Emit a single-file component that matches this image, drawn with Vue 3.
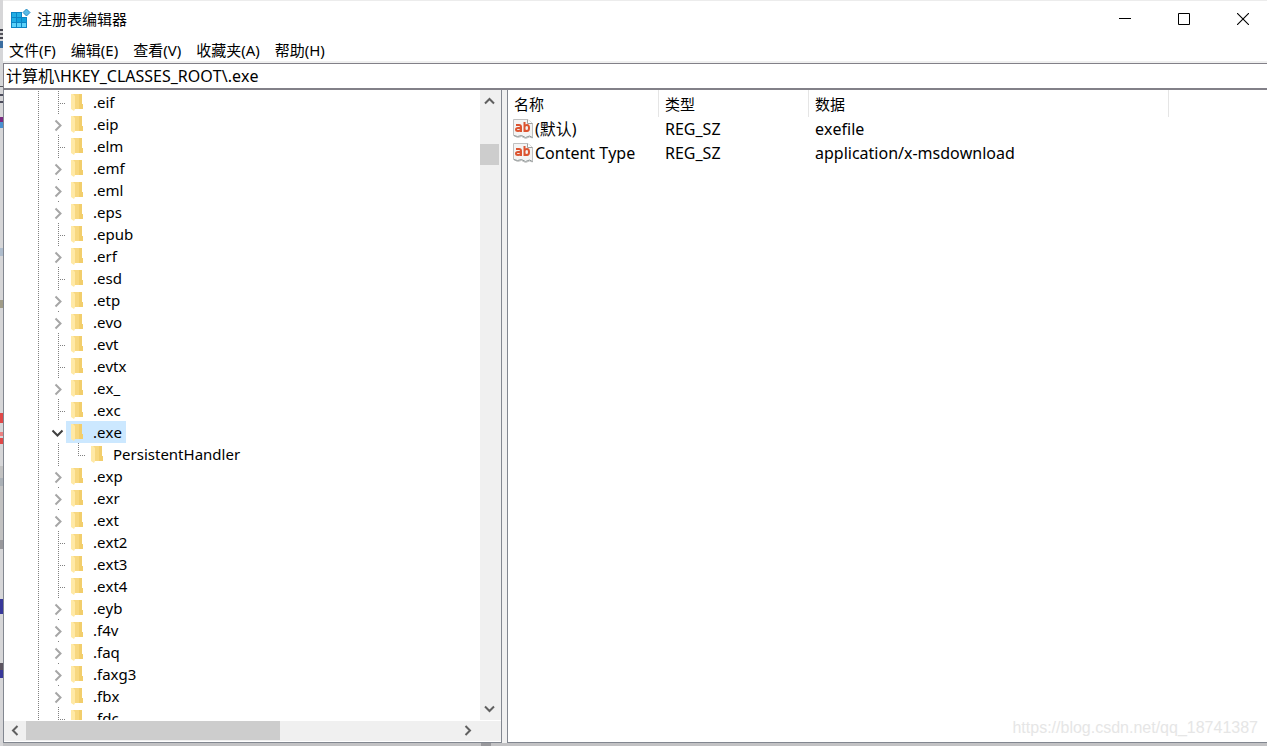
<script setup>
const menus = ['文件(F)', '编辑(E)', '查看(V)', '收藏夹(A)', '帮助(H)']

const leaf = (name) => ({ name, state: 'leaf' })
const closed = (name) => ({ name, state: 'closed' })

const keys = [
  leaf('.eif'), closed('.eip'), leaf('.elm'), closed('.emf'), closed('.eml'),
  closed('.eps'), leaf('.epub'), closed('.erf'), leaf('.esd'), closed('.etp'),
  closed('.evo'), leaf('.evt'), leaf('.evtx'), closed('.ex_'), leaf('.exc'),
  { name: '.exe', state: 'open', selected: true },
  { name: 'PersistentHandler', state: 'child' },
  closed('.exp'), closed('.exr'), closed('.ext'), leaf('.ext2'), leaf('.ext3'),
  leaf('.ext4'), closed('.eyb'), closed('.f4v'), closed('.faq'),
  closed('.faxg3'), closed('.fbx'), leaf('.fdc'),
]

const values = [
  { name: '(默认)', type: 'REG_SZ', data: 'exefile' },
  { name: 'Content Type', type: 'REG_SZ', data: 'application/x-msdownload' },
]

const marks = [
  { y: 29, h: 2, c: '#44444e' }, { y: 33, h: 2, c: '#55555c' }, { y: 37, h: 2, c: '#44444e' },
  { y: 41, h: 7, c: '#3c6ea0' }, { y: 86, h: 1, c: '#55555c' }, { y: 94, h: 2, c: '#4c4c5c' },
  { y: 101, h: 2, c: '#4c4c5c' }, { y: 117, h: 5, c: '#7a2a80' }, { y: 122, h: 6, c: '#4a90d0' },
  { y: 248, h: 8, c: '#aebccc' }, { y: 300, h: 8, c: '#a09c88' }, { y: 413, h: 10, c: '#e04848' },
  { y: 432, h: 4, c: '#ec8080' }, { y: 438, h: 6, c: '#e04848' }, { y: 478, h: 8, c: '#aab0b6' },
  { y: 540, h: 9, c: '#98989c' }, { y: 599, h: 15, c: '#38389a' }, { y: 663, h: 7, c: '#5c5460' },
  { y: 670, h: 8, c: '#38389a' },
]
</script>

<template>
  <div class="desktop">
    <svg class="behind" aria-hidden="true">
      <rect y="466" width="3" height="80" fill="#c2c2c2" />
      <rect v-for="m in marks" :key="m.y" :y="m.y" width="3" :height="m.h" :fill="m.c" />
    </svg>

    <main class="window">
      <header class="title-bar">
        <svg class="app-icon" width="20" height="20" viewBox="0 0 20 20" aria-hidden="true">
          <path d="M0 3h11v5h5v11H0z" fill="#0c84c4" />
          <path d="M1 4h4v4H1zM1 9h4v4H1zM6 4h4v4H6z" fill="#22aee4" />
          <path d="M6 9h4v4H6zM11 9h4v4h-4z" fill="#10a0dc" />
          <path d="M1 14h4v4H1zM6 14h4v4H6zM11 14h4v4h-4z" fill="#5cd2fa" />
          <path d="M15.500 0 19 3.500 15.500 7 12 3.500z" fill="#58bce8" stroke="#2c8cc0" />
        </svg>
        <h1>注册表编辑器</h1>
        <div class="caption">
          <button type="button" aria-label="最小化">
            <svg width="12" height="12" viewBox="0 0 12 12"><path d="M0 5.500h12" stroke="#000" /></svg>
          </button>
          <button type="button" aria-label="最大化">
            <svg width="12" height="12" viewBox="0 0 12 12"><path d="M.5.5h11v11H.5z" fill="none" stroke="#000" /></svg>
          </button>
          <button type="button" aria-label="关闭">
            <svg width="12" height="12" viewBox="0 0 12 12"><path d="M0 0l12 12M12 0 0 12" stroke="#000" stroke-width="1.100" /></svg>
          </button>
        </div>
      </header>

      <nav class="menu-bar">
        <button v-for="m in menus" :key="m" type="button">{{ m }}</button>
      </nav>

      <input class="address" type="text" aria-label="地址" value="计算机\HKEY_CLASSES_ROOT\.exe" />

      <div class="panes">
        <section class="tree-pane">
          <ul class="tree">
            <li v-for="k in keys" :key="k.name">
              <svg :width="k.state === 'child' ? 82 : 62" height="22" aria-hidden="true">
                <g stroke="#808080" stroke-dasharray="1 1" shape-rendering="crispEdges" fill="none">
                  <path d="M34.500 0v22" />
                  <path v-if="k.state === 'leaf'" d="M54.500 0v22M54 12.500h9" />
                  <path v-if="k.state === 'closed'" d="M54.500 0v1" />
                  <path v-if="k.state === 'child'" d="M54.500 0v22M74.500 0v12M74 12.500h9" />
                </g>
                <path v-if="k.state === 'closed'" d="M51.500 7.500l5 5-5 5" fill="none" stroke="#a6a6a6" stroke-width="2" />
                <path v-if="k.state === 'open'" d="M48.500 9.500l5 5 5-5" fill="none" stroke="#404040" stroke-width="2" />
              </svg>
              <button type="button" class="key" :class="{ selected: k.selected }">
                <svg width="13" height="18" viewBox="0 0 13 18" aria-hidden="true">
                  <path d="M2 1h9v10h1v5H2z" fill="#f8d880" />
                  <path d="M8 1h3v10h1v5H8z" fill="#f2ce6c" />
                  <path d="M0 1h2l2 2v13l-1 2-3-2z" fill="#ffe9a6" />
                </svg>
                <span>{{ k.name }}</span>
              </button>
            </li>
          </ul>
          <div class="v-scroll">
            <button type="button" aria-label="向上滚动">
              <svg width="11" height="8" viewBox="0 0 11 8"><path d="M1 6.500 5.500 2 10 6.500" fill="none" stroke="#606060" stroke-width="2" /></svg>
            </button>
            <div class="v-track"><div class="v-thumb"></div></div>
            <button type="button" aria-label="向下滚动">
              <svg width="11" height="8" viewBox="0 0 11 8"><path d="M1 1.500 5.500 6 10 1.500" fill="none" stroke="#606060" stroke-width="2" /></svg>
            </button>
          </div>
          <div class="h-scroll">
            <button type="button" aria-label="向左滚动">
              <svg width="8" height="11" viewBox="0 0 8 11"><path d="M6.500 1 2 5.500 6.500 10" fill="none" stroke="#606060" stroke-width="2" /></svg>
            </button>
            <div class="h-track"><div class="h-thumb"></div></div>
            <button type="button" aria-label="向右滚动">
              <svg width="8" height="11" viewBox="0 0 8 11"><path d="M1.500 1 6 5.500 1.500 10" fill="none" stroke="#606060" stroke-width="2" /></svg>
            </button>
          </div>
        </section>

        <section class="value-pane">
          <table>
            <colgroup><col class="c-name" /><col class="c-type" /><col class="c-data" /><col /></colgroup>
            <thead>
              <tr><th>名称</th><th>类型</th><th>数据</th><td></td></tr>
            </thead>
            <tbody>
              <tr v-for="v in values" :key="v.name">
                <td>
                  <div class="value-name">
                    <svg width="20" height="20" viewBox="0 0 20 20" aria-hidden="true">
                      <path d="M.5.500h14l5 4v14.500l-3-1-4 1.500-4-2-4 1-4-2z" fill="#f4f4f4" stroke="#c0c0c0" />
                      <path d="M14.500.5v4h5" fill="#fff" stroke="#a0a0a0" />
                      <path d="M1 16.500l3.500 1 4-1 4 2 4-1.500 3 1.500" fill="none" stroke="#909898" />
                      <g fill="none" stroke="#dc5430" stroke-width="2">
                        <path d="M3 6h3q2 0 2 2v5M8 9H5q-2 0-2 1.500t2 1.500q3 0 3-2" />
                        <path d="M11.500 3v10M11.500 7.500q1-1.500 2.500-1.500 2 0 2 3t-2 3q-1.500 0-2.500-1" />
                      </g>
                    </svg>
                    <span>{{ v.name }}</span>
                  </div>
                </td>
                <td>{{ v.type }}</td>
                <td>{{ v.data }}</td>
                <td></td>
              </tr>
            </tbody>
          </table>
          <p class="watermark">https://blog.csdn.net/qq_18741387</p>
        </section>
      </div>
      <div class="edge"><span></span></div>
    </main>
  </div>
</template>

<style>
body { margin: 0; }
</style>

<style scoped>
* { box-sizing: border-box; }
.desktop {
  display: flex;
  height: 100vh;
  overflow: hidden;
  font: 15px/22px "Noto Sans", "Noto Sans CJK SC", sans-serif;
  font-kerning: none;
  color: #000;
  background: #d6d6d8;
}
button {
  display: flex;
  align-items: center;
  justify-content: center;
  margin: 0;
  padding: 0;
  border: 0;
  background: none;
  font: inherit;
  font-kerning: none;
  color: inherit;
}
svg { display: block; flex: none; }
.behind { width: 3px; height: 100%; }
.window {
  flex: 1;
  min-width: 0;
  display: flex;
  flex-direction: column;
  background: #fff;
  border-top: 1px solid #ececec;
}
.title-bar {
  display: flex;
  align-items: center;
  height: 35px;
  padding: 0 18px 0 8px;
}
.app-icon { margin-right: 6px; }
h1 { margin: 0; font-size: 15px; font-weight: 400; }
.caption { display: flex; gap: 47px; margin-left: auto; }
.menu-bar {
  display: flex;
  gap: 15px;
  height: 27px;
  padding: 2px 6px 0;
  border-bottom: 2px solid #f0f0f0;
}
.address {
  width: 100%;
  height: 27px;
  padding: 0 2px 2px;
  border: solid #828088;
  border-width: 1px 0 2px 1px;
  background: #fff;
  font: inherit;
  font-size: 16px;
  color: inherit;
  outline: none;
}
.panes {
  flex: 1;
  min-height: 0;
  display: flex;
  gap: 5px;
  background: #f0f0f0;
}
.tree-pane {
  display: grid;
  grid-template: minmax(0, 1fr) 22px / minmax(0, 1fr) 21px;
  width: 499px;
  border: solid #828790;
  border-width: 0 1px 1px;
  background: #fff;
}
.tree {
  margin: 0;
  padding: 1px 0 0;
  list-style: none;
  overflow: hidden;
}
.tree li { display: flex; height: 22px; }
.key { height: 22px; padding: 0 4px 0 5px; gap: 9px; }
.key.selected { background: #cce8ff; }
.v-scroll {
  display: flex;
  flex-direction: column;
  background: #f0f0f0;
}
.v-scroll button { width: 19px; height: 22px; }
.v-track { flex: 1; padding-top: 32px; }
.v-thumb { width: 19px; height: 21px; background: #cdcdcd; }
.h-scroll {
  grid-column: 1 / -1;
  display: flex;
  height: 20px;
  margin-top: 1px;
  padding: 0 22px 0 0;
  background: #f0f0f0;
}
.h-scroll button { width: 22px; height: 19px; }
.h-track { flex: 1; }
.h-thumb { width: 59%; height: 19px; background: #cdcdcd; }
.value-pane {
  position: relative;
  flex: 1;
  min-width: 0;
  border: solid #828790;
  border-width: 0 0 1px 1px;
  background: #fff;
}
table { width: 100%; table-layout: fixed; border-collapse: separate; border-spacing: 0; }
.c-name { width: 151px; }
.c-type { width: 150px; }
.c-data { width: 360px; }
th, td { height: 24px; padding: 0 6px; text-align: left; font-weight: 400; }
th { height: 27px; border-right: 1px solid #e5e5e5; }
tbody td { font-size: 16px; }
.value-name { display: flex; align-items: center; gap: 2px; margin-left: -1px; }
.watermark {
  position: absolute;
  right: 9px;
  bottom: 3px;
  margin: 0;
  font: 16px/22px "Liberation Sans", sans-serif;
  color: #e6e6e6;
}
.edge { height: 3px; background: #c2c2c4; }
.edge span { display: block; width: 10px; height: 3px; margin-left: 478px; background: #98989c; }
</style>
